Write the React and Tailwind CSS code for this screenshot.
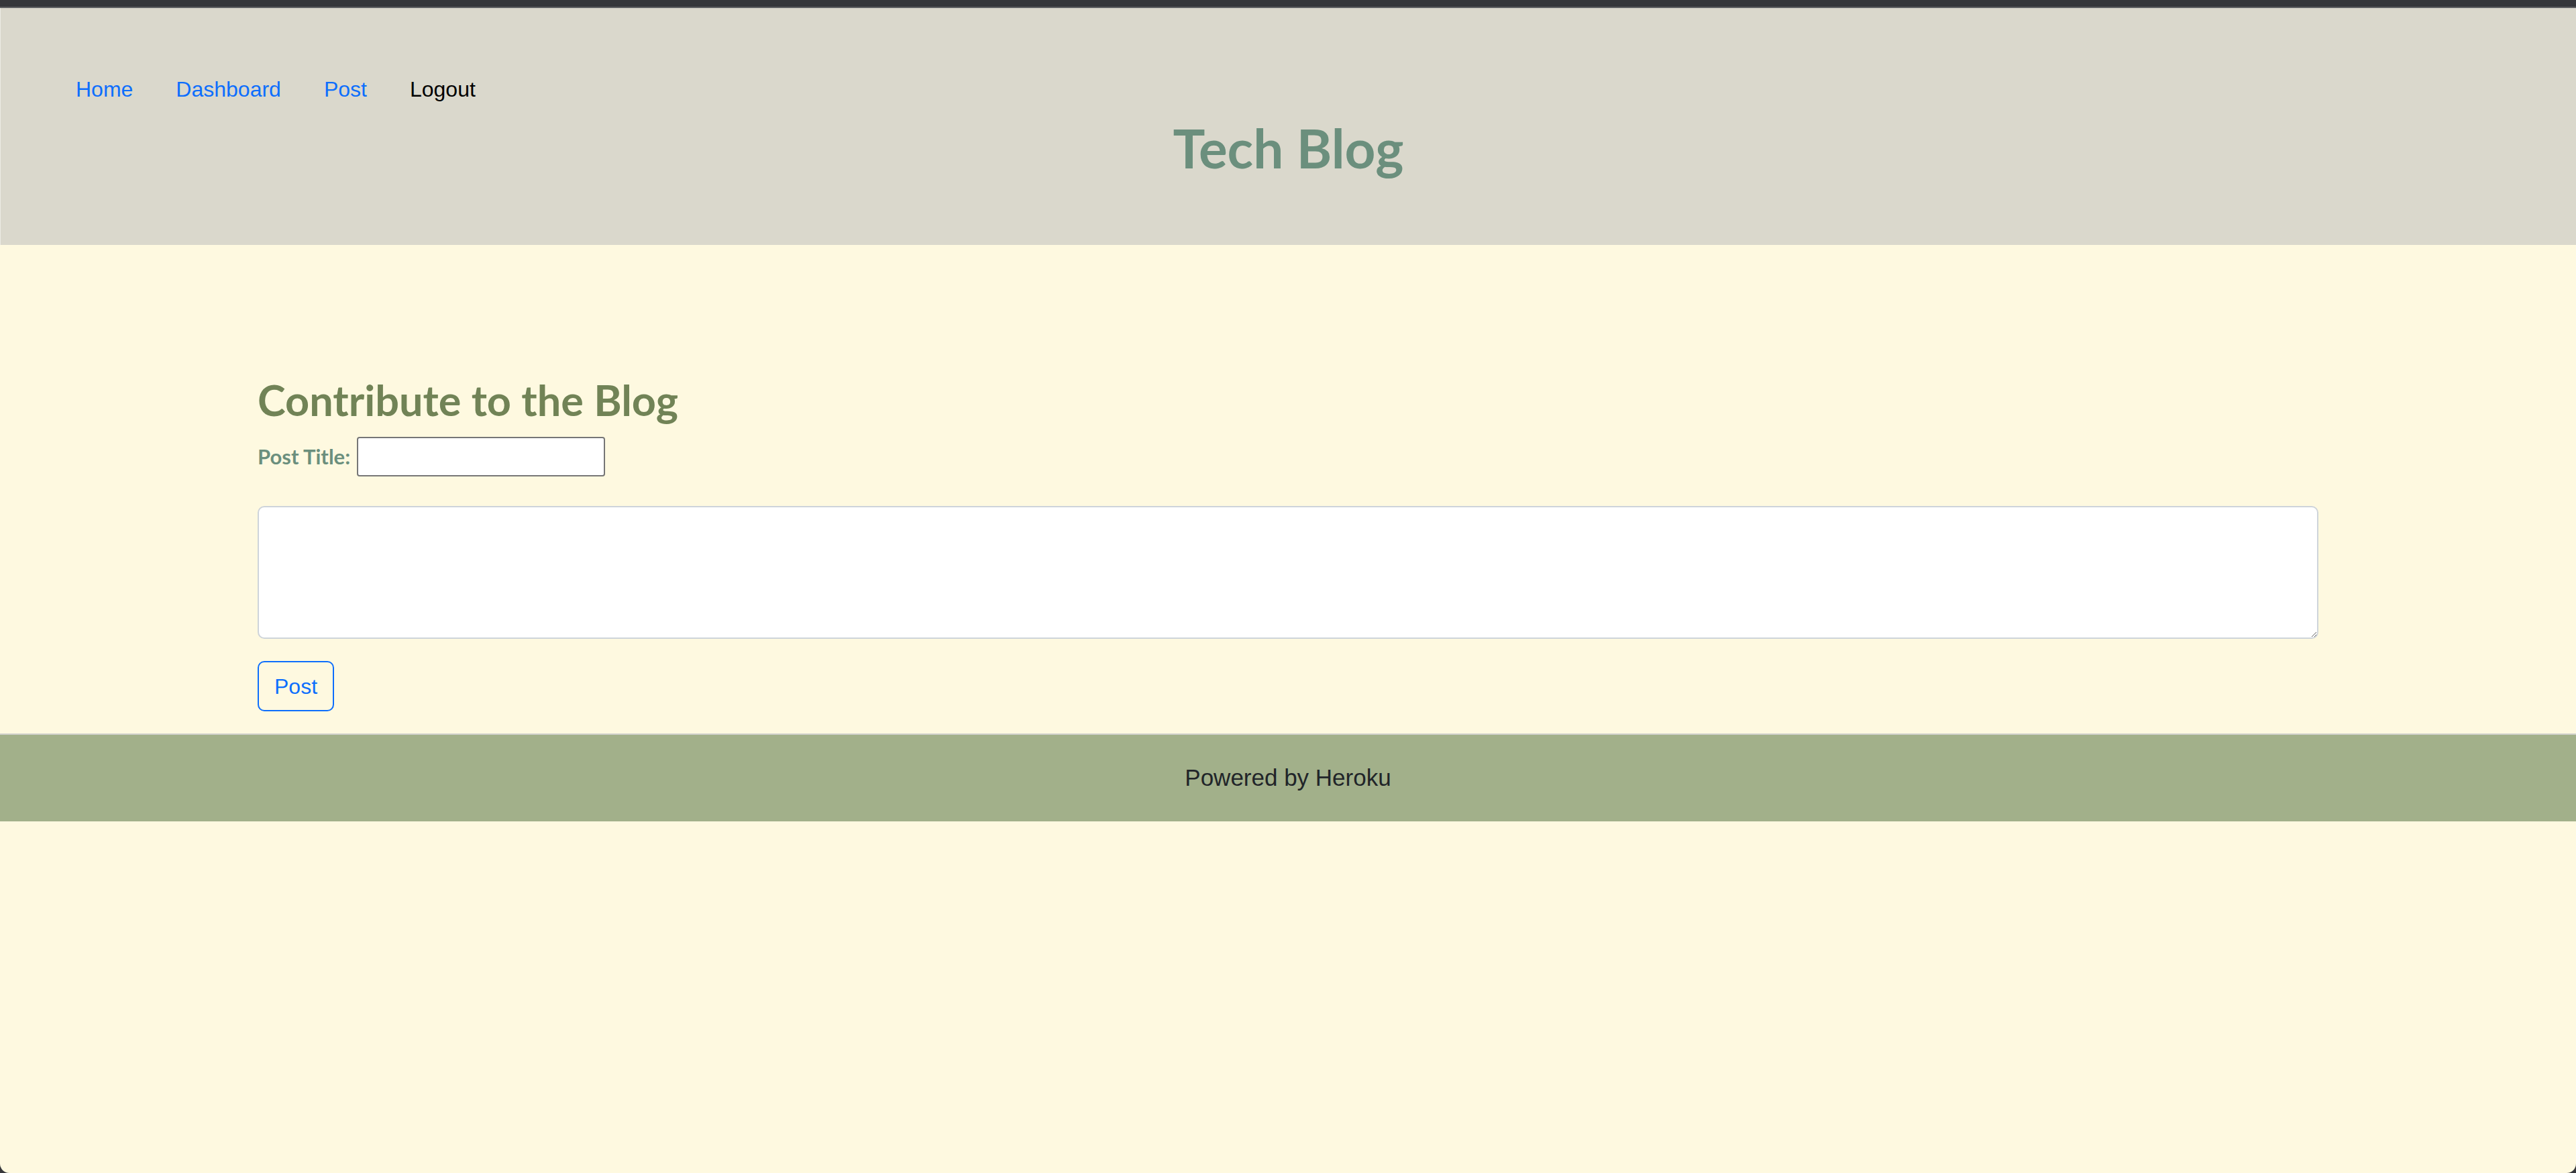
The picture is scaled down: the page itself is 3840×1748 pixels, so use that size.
import React, { useState } from 'react';

const sans = "font-['Liberation_Sans',Arial,sans-serif]";
const display = "font-['Lato','Open_Sans',sans-serif]";

export default function App() {
  const [title, setTitle] = useState('');
  const [body, setBody] = useState('');

  const links = [
    { label: 'Home', color: 'text-[#0d6efd]' },
    { label: 'Dashboard', color: 'text-[#0d6efd]' },
    { label: 'Post', color: 'text-[#0d6efd]' },
    { label: 'Logout', color: 'text-black' },
  ];

  return (
    <div className="min-h-[1748px] bg-[#36373b] flex flex-col">
      {/* window chrome line */}
      <div className="h-[10px] bg-[#36373b]" />
      <div className="h-[2px] bg-[#5f6063]" />

      <div className="flex-1 flex flex-col bg-[#fef9e0] rounded-b-[14px] overflow-hidden">
        {/* Header */}
        <header className="bg-[#dad8cc] border-l border-[#ecebe4] pt-[81px] pb-[98px]">
          <nav className={`flex pl-[80px] ${sans}`}>
            {links.map(link => (
              <a
                key={link.label}
                href="#"
                className={`px-[32px] py-[16px] text-[32px] leading-[48px] ${link.color}`}
              >
                {link.label}
              </a>
            ))}
          </nav>
          <h1 className={`text-center text-[80px] leading-[94px] font-bold text-[#6b8f7d] ${display}`}>
            Tech Blog
          </h1>
        </header>

        {/* Post form */}
        <main className="w-[80%] mx-auto pt-[192px] pb-[33px]">
          <h2 className={`text-[63px] leading-[77px] font-bold text-[#718356] ${display}`}>
            Contribute to the Blog
          </h2>
          <div className="flex items-center mt-[17px]">
            <label className={`text-[31px] font-bold text-[#6b8f7d] ${display}`}>Post Title:</label>
            <input
              type="text"
              value={title}
              onChange={(e) => setTitle(e.target.value)}
              className="ml-[10px] w-[370px] h-[59px] bg-white border-2 border-[#767676] rounded-[4px] px-2 text-[28px]"
            />
          </div>
          <textarea
            value={body}
            onChange={(e) => setBody(e.target.value)}
            className="block w-full h-[198px] mt-[44px] bg-white border-2 border-[#ced4da] rounded-[10px] p-3 text-[32px]"
          />
          <button
            className={`mt-[33px] w-[114px] h-[75px] border-2 border-[#0d6efd] rounded-[10px] text-[32px] text-[#0d6efd] ${sans}`}
          >
            Post
          </button>
        </main>

        {/* Footer */}
        <footer className="border-t-2 border-[#d0d0cc] bg-[#a2b08a] h-[131px] flex items-center justify-center">
          <p className={`text-[35px] text-[#212529] ${sans}`}>Powered by Heroku</p>
        </footer>
      </div>
    </div>
  );
}
